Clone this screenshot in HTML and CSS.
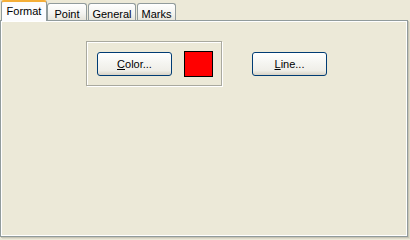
FILE: index.html
```html
<!DOCTYPE html>
<html>
<head>
<meta charset="utf-8">
<link rel="stylesheet" href="styles.css">
</head>
<body>
<div class="dialog">
  <div class="tabs">
    <div class="tab selected">Format</div>
    <div class="tab t-point">Point</div>
    <div class="tab t-general">General</div>
    <div class="tab t-marks">Marks</div>
  </div>
  <div class="panel">
    <div class="row">
      <div class="group">
        <button class="btn"><u>C</u>olor...</button>
        <div class="swatch"></div>
      </div>
      <button class="btn line-btn"><u>L</u>ine...</button>
    </div>
  </div>
</div>
</body>
</html>
```
FILE: styles.css
```css
html, body {
  margin: 0;
  padding: 0;
  background: #ECE9D8;
  font-family: "Liberation Sans", Arial, sans-serif;
  font-size: 11px;
  color: #000;
}
.dialog {
  width: 410px;
  height: 239px;
  box-sizing: border-box;
}
.tabs {
  display: flex;
  align-items: flex-end;
  height: 20px;
  padding-left: 1px;
  position: relative;
  z-index: 2;
}
.tab {
  box-sizing: border-box;
  height: 17px;
  border: 1px solid #919B9C;
  border-bottom: none;
  border-radius: 3px 3px 0 0;
  background: linear-gradient(#FFFFFF, #F3F3EF 60%, #E6E4DA);
  text-align: center;
  line-height: 16px;
  padding-top: 2px;
}
.tab.selected {
  width: 46px;
  height: 21px;
  margin-bottom: -1px;
  background: #FCFCFE;
  border-top: 2px solid #F5AE38;
  border-color: #919B9C;
  border-top-color: #F5AE38;
  line-height: 16px;
  padding-top: 1px;
}
.t-point { width: 40px; }
.t-general { width: 48px; margin-left: 1px; }
.t-marks { width: 39px; margin-left: 1px; }
.panel {
  box-sizing: border-box;
  width: 408px;
  height: 217px;
  border: 1px solid #919B9C;
  box-shadow: inset 1px 1px 0 #FFFFFF, inset -1px -1px 0 #FFFFFF, 1px 1px 0 #C8C5B4, 2px 2px 0 #DDDACA;
  background: #ECE9D8;
  padding: 20px 0 0 85px;
}
.row {
  display: flex;
  align-items: center;
}
.group {
  box-sizing: border-box;
  width: 136px;
  height: 45px;
  border: 1px solid #A9A99F;
  box-shadow: 1px 1px 0 #FFFFFF, inset 1px 1px 0 #FFFFFF;
  display: flex;
  align-items: center;
  padding-left: 10px;
  margin-right: 30px;
}
.btn {
  box-sizing: border-box;
  width: 75px;
  height: 24px;
  border: 1px solid #003C74;
  border-radius: 3px;
  background: linear-gradient(#FFFFFF, #F5F5F1 45%, #EFEEE8 80%, #D8D3C6);
  font-family: "Liberation Sans", Arial, sans-serif;
  font-size: 11px;
  color: #000;
  padding: 0;
  line-height: 20px;
}
.swatch {
  box-sizing: border-box;
  width: 29px;
  height: 26px;
  margin-left: 12px;
  background: #FF0000;
  border: 1px solid #000;
}
```
